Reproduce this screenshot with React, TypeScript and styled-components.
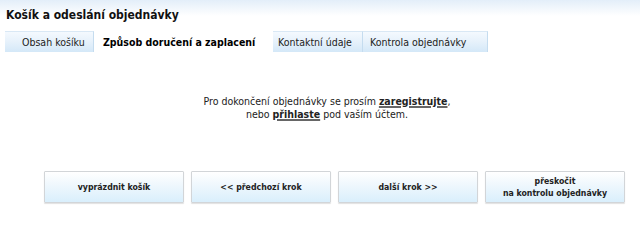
import React from "react";
import styled, { createGlobalStyle } from "styled-components";

const Global = createGlobalStyle`
  html, body { margin: 0; padding: 0; background: #ffffff; }
  body { font-family: "DejaVu Sans Condensed", "DejaVu Sans", sans-serif; color: #1a1a1a; }
`;

const Page = styled.div`
  width: 640px;
  height: 241px;
  background: linear-gradient(to bottom, #e3eef9 0px, #ffffff 16px);
`;

const Title = styled.h1`
  margin: 0;
  padding: 8px 0 0 6px;
  height: 23px;
  font-size: 12px;
  line-height: 15px;
  font-weight: bold;
  color: #111;
`;

const TabBar = styled.div`
  display: flex;
  margin-left: 5px;
  height: 21px;
`;

const Tab = styled.div<{ $active?: boolean; $w: number; $pl: number }>`
  box-sizing: border-box;
  width: ${(p) => p.$w}px;
  height: 21px;
  padding-left: ${(p) => p.$pl}px;
  display: flex;
  align-items: center;
  font-size: 10.5px;
  white-space: nowrap;
  font-weight: ${(p) => (p.$active ? "bold" : "normal")};
  color: ${(p) => (p.$active ? "#000" : "#222")};
  background: ${(p) =>
    p.$active
      ? "#ffffff"
      : "linear-gradient(to bottom, #f4f9fe 0%, #e6f1fb 50%, #d4e8f8 100%)"};
  border-right: 1px solid ${(p) => (p.$active ? "#ffffff" : "#c5dcef")};
  border-top: 1px solid ${(p) => (p.$active ? "#ffffff" : "#d9e8f5")};
`;

const Message = styled.div`
  margin-top: 43px;
  padding-left: 14px;
  text-align: center;
  font-size: 10.5px;
  line-height: 13px;
  color: #222;
`;

const Link = styled.a`
  color: #222;
  font-weight: bold;
  text-decoration: underline;
  text-decoration-thickness: 2px;
  text-decoration-color: #666;
  text-underline-offset: 1px;
`;

const ButtonRow = styled.div`
  display: flex;
  gap: 7px;
  margin-top: 50px;
  padding-left: 44px;
`;

const Button = styled.button`
  box-sizing: border-box;
  width: 140px;
  height: 32px;
  border: 1px solid #d2d5d8;
  border-radius: 1px;
  background: linear-gradient(to bottom, #ffffff 0%, #eef7fd 45%, #d9effc 100%);
  box-shadow: 0 1px 1px rgba(0, 0, 0, 0.12);
  font-family: "DejaVu Sans Condensed", "DejaVu Sans", sans-serif;
  font-size: 8.7px;
  font-weight: bold;
  line-height: 12px;
  color: #222;
  padding: 0;
  cursor: pointer;
`;

export default function App() {
  return (
    <>
      <Global />
      <Page>
        <Title>Košík a odeslání objednávky</Title>
        <TabBar>
          <Tab $w={89} $pl={17}>Obsah košíku</Tab>
          <Tab $w={179} $pl={9} $active>Způsob doručení a zaplacení</Tab>
          <Tab $w={90} $pl={5}>Kontaktní údaje</Tab>
          <Tab $w={125} $pl={7}>Kontrola objednávky</Tab>
        </TabBar>
        <Message>
          Pro dokončení objednávky se prosím <Link>zaregistrujte</Link>,
          <br />
          nebo <Link>přihlaste</Link> pod vaším účtem.
        </Message>
        <ButtonRow>
          <Button>vyprázdnit košík</Button>
          <Button>&lt;&lt; předchozí krok</Button>
          <Button>další krok &gt;&gt;</Button>
          <Button>
            přeskočit
            <br />
            na kontrolu objednávky
          </Button>
        </ButtonRow>
      </Page>
    </>
  );
}
